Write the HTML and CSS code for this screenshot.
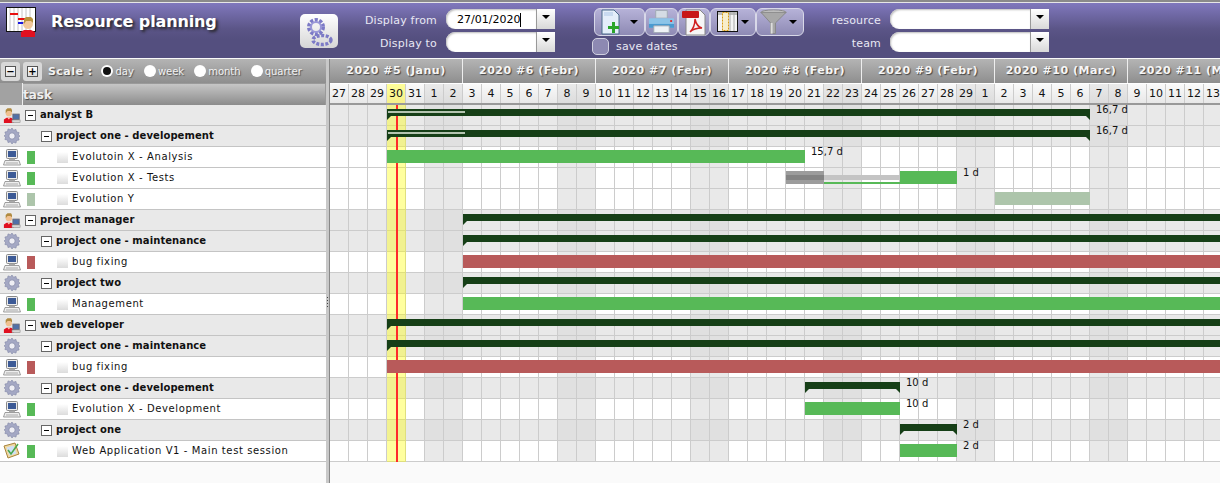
FILE: index.html
```html
<!DOCTYPE html>
<html lang="en">
<head>
  <meta charset="UTF-8">
  <title>Resource planning</title>
  <link rel="stylesheet" href="styles.css">
</head>
<body>

  <!-- shared icons -->
  <svg class="defs" width="0" height="0">
    <symbol id="i-user" viewBox="0 0 20 18">
      <path d="M1 18v-4l3-2h5l3 2v4z" fill="#e01020"/>
      <path d="M5 12l1.500 2L8 12z" fill="#ffd0b0"/>
      <circle cx="6.500" cy="7" r="3.500" fill="#f0c090"/>
      <path d="M3 7V3.500L5 1.500h4l1 2V6L8 4.500H5z" fill="#b08a40"/>
      <rect x="11" y="8" width="7" height="6" fill="#5070a8" stroke="#667" stroke-width="1"/>
      <rect x="10" y="14.500" width="9" height="3" fill="#d8d8d8" stroke="#888" stroke-width=".6"/>
    </symbol>
    <symbol id="i-gear" viewBox="0 0 18 18">
      <path d="M9 1l1.500 2.200 2.500-.8.500 2.600 2.600.5-.8 2.500L17 9l-1.700 1.500.8 2.500-2.600.5-.5 2.600-2.500-.8L9 17l-1.500-2.200-2.500.8-.5-2.600-2.600-.5.8-2.500L1 9l1.700-1.500-.8-2.500 2.600-.5.500-2.600 2.500.8z" fill="#a4a8c4" stroke="#8286a6" stroke-width=".6"/>
      <circle cx="9" cy="9" r="3.200" fill="#eeeef4" stroke="#8286a6" stroke-width=".8"/>
    </symbol>
    <symbol id="i-pc" viewBox="0 0 18 18">
      <rect x="3.500" y="1.500" width="11" height="9" rx="1" fill="#ececec" stroke="#888"/>
      <rect x="5" y="3" width="8" height="6" fill="#3c5a96"/>
      <rect x="6" y="10.500" width="6" height="1.500" fill="#aaa"/>
      <path d="M2 12.500h14l1.500 4.500H.5z" fill="#eeeeee" stroke="#888" stroke-width=".8"/>
      <path d="M3 15h12" stroke="#aaa"/>
    </symbol>
    <symbol id="i-test" viewBox="0 0 18 18">
      <path d="M1 4l11-3 4 11-11 4z" fill="#f0d8a0" stroke="#a8843c"/>
      <path d="M3.500 5.500l7-2 3 8-7 2z" fill="#cfe0f6"/>
      <path d="M5 8l3 4 7-10" fill="none" stroke="#4aa84d" stroke-width="1.600"/>
    </symbol>
  </svg>

  <div class="top-strip"></div>

  <header class="header">
    <svg class="logo" width="32" height="30" viewBox="0 0 32 30">
      <rect x=".5" y=".5" width="29" height="24" fill="#fff" stroke="#111"/>
      <path d="M4 1v23M8 1v23M12 1v23M16 1v23M20 1v23M24 1v23" stroke="#c4c4c4"/>
      <rect x="4" y="6" width="8" height="2" fill="#e81010"/>
      <rect x="12" y="11" width="8" height="2" fill="#e81010"/>
      <rect x="12" y="15" width="7" height="2" fill="#1a1ae0"/>
      <path d="M15 30v-5l3-2h7l4 2v5z" fill="#e01020"/>
      <circle cx="22" cy="17" r="5" fill="#f2c79a"/>
      <path d="M18 17v-5l2-2h5l2 2v4l-2-2h-5z" fill="#b9923c"/>
    </svg>
    <h1 class="title">Resource planning</h1>

    <div class="gear-btn">
      <svg width="32" height="32" viewBox="0 0 32 32">
        <circle cx="13" cy="12" r="7" fill="none" stroke="#7c7ac6" stroke-width="4" stroke-dasharray="3 1.500"/>
        <circle cx="13" cy="12" r="5" fill="none" stroke="#9a98d8" stroke-width="2"/>
        <ellipse cx="19" cy="25" rx="9" ry="4.500" fill="none" stroke="#7c7ac6" stroke-width="3.500" stroke-dasharray="3 1.500"/>
      </svg>
    </div>

    <div class="filter-col dates">
      <div class="field">
        <label class="field-label">Display from</label>
        <div class="combo date-combo"><div class="combo-text"><span class="caret-end">27/01/2020</span></div><div class="combo-arrow"></div></div>
      </div>
      <div class="field">
        <label class="field-label">Display to</label>
        <div class="combo date-combo"><div class="combo-text"></div><div class="combo-arrow"></div></div>
      </div>
    </div>

    <div class="tools">
      <div class="tool-row">
        <div class="tool tool-new">
          <svg width="20" height="26" viewBox="0 0 20 26">
            <path d="M1 1h12l5 5v19H1z" fill="#e4eefa" stroke="#4a6a8a"/>
            <path d="M3 3h9v4H3z" fill="#c8daf0"/>
            <path d="M11 13h3v4h4v3h-4v4h-3v-4H7v-3h4z" fill="#2aa52a"/>
          </svg>
          <span class="arrow"></span>
        </div>
        <div class="tool tool-print">
          <svg width="28" height="26" viewBox="0 0 28 26">
            <path d="M8 1h12v8H8z" fill="#d4dce4" stroke="#a0aab4"/>
            <path d="M2 9h24a1 1 0 0 1 1 1v9H1v-9a1 1 0 0 1 1-1z" fill="#8cc4e8"/>
            <path d="M1 15h26v4H1z" fill="#4a9ad0"/>
            <path d="M6 17h16v7H6z" fill="#eef2f6" stroke="#a0aab4"/>
            <rect x="23" y="11" width="2" height="2" fill="#e03030"/>
          </svg>
        </div>
        <div class="tool tool-pdf">
          <svg width="26" height="27" viewBox="0 0 26 27">
            <path d="M5 1h14l5 5v20H5z" fill="#f6f6f6" stroke="#888"/>
            <rect x="1" y="2" width="17" height="7" rx="1" fill="#c81818"/>
            <path d="M9 23c3-3 5-8 5-13 1 5 3 8 7 9-4 0-9 1-12 4z" fill="none" stroke="#d02020" stroke-width="1.500"/>
          </svg>
        </div>
        <div class="tool tool-cols">
          <svg width="22" height="22" viewBox="0 0 22 22">
            <rect x=".5" y=".5" width="20" height="20" fill="#f4f4f4" stroke="#111"/>
            <rect x="1" y="1" width="19" height="3" fill="#bbb"/>
            <path d="M13 1v19M17 1v19" stroke="#aaa"/>
            <rect x="5.500" y="1.500" width="6" height="18" fill="#f8eecb" stroke="#d89a10" stroke-dasharray="2 1"/>
          </svg>
          <span class="arrow"></span>
        </div>
        <div class="tool tool-filter">
          <svg width="30" height="26" viewBox="0 0 30 26">
            <ellipse cx="14" cy="3" rx="13" ry="2.500" fill="#c8c8c8" stroke="#888"/>
            <path d="M1 3l10 11v11h5V14L27 3z" fill="#a8a8a8" stroke="#888"/>
            <path d="M12 14v11" stroke="#ddd" stroke-width="2"/>
          </svg>
          <span class="arrow"></span>
        </div>
      </div>
      <div class="save-row">
        <span class="check"></span>
        <span class="save-label">save dates</span>
      </div>
    </div>

    <div class="filter-col people">
      <div class="field">
        <label class="field-label">resource</label>
        <div class="combo people-combo"><div class="combo-text"></div><div class="combo-arrow"></div></div>
      </div>
      <div class="field">
        <label class="field-label">team</label>
        <div class="combo people-combo"><div class="combo-text"></div><div class="combo-arrow"></div></div>
      </div>
    </div>
  </header>

  <div class="main">
    <div class="left-panel">
      <div class="scale-bar">
        <span class="zoom-btn minus"></span>
        <span class="zoom-btn plus"></span>
        <span class="scale-title">Scale :</span>
        <span class="radio on"></span><span class="radio-label">day</span>
        <span class="radio"></span><span class="radio-label">week</span>
        <span class="radio"></span><span class="radio-label">month</span>
        <span class="radio"></span><span class="radio-label">quarter</span>
      </div>
      <div class="task-head">
        <div class="task-head-ico"></div>
        <div class="task-head-name">task</div>
      </div>

      <div class="tree-row grp lvl1"><svg class="ico"><use href="#i-user"/></svg><span class="toggle"></span><span class="name">analyst B</span></div>
      <div class="tree-row grp lvl2"><svg class="ico"><use href="#i-gear"/></svg><span class="toggle"></span><span class="name">project one - developement</span></div>
      <div class="tree-row task"><svg class="ico"><use href="#i-pc"/></svg><span class="state green"></span><span class="chk"></span><span class="name">Evolutoin X - Analysis</span></div>
      <div class="tree-row task"><svg class="ico"><use href="#i-pc"/></svg><span class="state green"></span><span class="chk"></span><span class="name">Evolution X - Tests</span></div>
      <div class="tree-row task"><svg class="ico"><use href="#i-pc"/></svg><span class="state pale"></span><span class="chk"></span><span class="name">Evolution Y</span></div>
      <div class="tree-row grp lvl1"><svg class="ico"><use href="#i-user"/></svg><span class="toggle"></span><span class="name">project manager</span></div>
      <div class="tree-row grp lvl2"><svg class="ico"><use href="#i-gear"/></svg><span class="toggle"></span><span class="name">project one - maintenance</span></div>
      <div class="tree-row task"><svg class="ico"><use href="#i-pc"/></svg><span class="state red"></span><span class="chk"></span><span class="name">bug fixing</span></div>
      <div class="tree-row grp lvl2"><svg class="ico"><use href="#i-gear"/></svg><span class="toggle"></span><span class="name">project two</span></div>
      <div class="tree-row task"><svg class="ico"><use href="#i-pc"/></svg><span class="state green"></span><span class="chk"></span><span class="name">Management</span></div>
      <div class="tree-row grp lvl1"><svg class="ico"><use href="#i-user"/></svg><span class="toggle"></span><span class="name">web developer</span></div>
      <div class="tree-row grp lvl2"><svg class="ico"><use href="#i-gear"/></svg><span class="toggle"></span><span class="name">project one - maintenance</span></div>
      <div class="tree-row task"><svg class="ico"><use href="#i-pc"/></svg><span class="state red"></span><span class="chk"></span><span class="name">bug fixing</span></div>
      <div class="tree-row grp lvl2"><svg class="ico"><use href="#i-gear"/></svg><span class="toggle"></span><span class="name">project one - developement</span></div>
      <div class="tree-row task"><svg class="ico"><use href="#i-pc"/></svg><span class="state green"></span><span class="chk"></span><span class="name">Evolution X - Development</span></div>
      <div class="tree-row grp lvl2"><svg class="ico"><use href="#i-gear"/></svg><span class="toggle"></span><span class="name">project one</span></div>
      <div class="tree-row task"><svg class="ico"><use href="#i-test"/></svg><span class="state green"></span><span class="chk"></span><span class="name">Web Application V1 - Main test session</span></div>
    </div>

    <div class="splitter"><span class="grip"></span></div>

    <div class="chart">
      <div class="weeks">
        <div class="week">2020 #5 (Janu)</div>
        <div class="week">2020 #6 (Febr)</div>
        <div class="week">2020 #7 (Febr)</div>
        <div class="week">2020 #8 (Febr)</div>
        <div class="week">2020 #9 (Febr)</div>
        <div class="week">2020 #10 (Marc)</div>
        <div class="week">2020 #11 (Marc)</div>
      </div>
      <div class="days">
        <div class="day">27</div><div class="day">28</div><div class="day">29</div><div class="day today-head">30</div><div class="day">31</div><div class="day we">1</div><div class="day we">2</div>
        <div class="day">3</div><div class="day">4</div><div class="day">5</div><div class="day">6</div><div class="day">7</div><div class="day we">8</div><div class="day we">9</div>
        <div class="day">10</div><div class="day">11</div><div class="day">12</div><div class="day">13</div><div class="day">14</div><div class="day we">15</div><div class="day we">16</div>
        <div class="day">17</div><div class="day">18</div><div class="day">19</div><div class="day">20</div><div class="day">21</div><div class="day we">22</div><div class="day we">23</div>
        <div class="day">24</div><div class="day">25</div><div class="day">26</div><div class="day">27</div><div class="day">28</div><div class="day we">29</div><div class="day we">1</div>
        <div class="day">2</div><div class="day">3</div><div class="day">4</div><div class="day">5</div><div class="day">6</div><div class="day we">7</div><div class="day we">8</div>
        <div class="day">9</div><div class="day">10</div><div class="day">11</div><div class="day">12</div><div class="day">13</div>
      </div>

      <div class="gantt">
        <div class="today"></div>

        <div class="g-row grp">
          <div class="bar-sum" style="grid-column: 4 / span 37"><span class="progress"></span></div>
          <span class="g-label" style="grid-column: 41 / span 3">16,7 d</span>
        </div>
        <div class="g-row grp">
          <div class="bar-sum" style="grid-column: 4 / span 37"><span class="progress"></span></div>
          <span class="g-label" style="grid-column: 41 / span 3">16,7 d</span>
        </div>
        <div class="g-row">
          <div class="bar green" style="grid-column: 4 / span 22"></div>
          <span class="g-label" style="grid-column: 26 / span 3">15,7 d</span>
        </div>
        <div class="g-row">
          <div class="bar late" style="grid-column: 25 / span 2"></div>
          <div class="bar gap" style="grid-column: 27 / span 4"></div>
          <div class="bar green" style="grid-column: 31 / span 3"></div>
          <span class="g-label" style="grid-column: 34 / span 3">1 d</span>
        </div>
        <div class="g-row">
          <div class="bar pale" style="grid-column: 36 / span 5"></div>
        </div>
        <div class="g-row grp"><div class="bar-sum open" style="grid-column: 8 / span 40"></div></div>
        <div class="g-row grp"><div class="bar-sum open" style="grid-column: 8 / span 40"></div></div>
        <div class="g-row"><div class="bar red" style="grid-column: 8 / span 40"></div></div>
        <div class="g-row grp"><div class="bar-sum open" style="grid-column: 8 / span 40"></div></div>
        <div class="g-row"><div class="bar green" style="grid-column: 8 / span 40"></div></div>
        <div class="g-row grp"><div class="bar-sum open" style="grid-column: 4 / span 44"></div></div>
        <div class="g-row grp"><div class="bar-sum open" style="grid-column: 4 / span 44"></div></div>
        <div class="g-row"><div class="bar red" style="grid-column: 4 / span 44"></div></div>
        <div class="g-row grp">
          <div class="bar-sum" style="grid-column: 26 / span 5"></div>
          <span class="g-label" style="grid-column: 31 / span 3">10 d</span>
        </div>
        <div class="g-row">
          <div class="bar green" style="grid-column: 26 / span 5"></div>
          <span class="g-label" style="grid-column: 31 / span 3">10 d</span>
        </div>
        <div class="g-row grp">
          <div class="bar-sum" style="grid-column: 31 / span 3"></div>
          <span class="g-label" style="grid-column: 34 / span 3">2 d</span>
        </div>
        <div class="g-row">
          <div class="bar green" style="grid-column: 31 / span 3"></div>
          <span class="g-label" style="grid-column: 34 / span 3">2 d</span>
        </div>
      </div>
    </div>
  </div>

</body>
</html>
```

FILE: styles.css
```css
html, body {
  margin: 0;
  height: 100%;
}
body {
  font-family: 'DejaVu Sans', Verdana, sans-serif;
  font-size: 10px;
  color: #111;
  background-color: #fafafa;
  width: 1220px;
  height: 483px;
  overflow: hidden;
}
.defs {
  position: absolute;
}
.top-strip {
  height: 3px;
  background: linear-gradient(#8a8a8a 0, #8a8a8a 2px, #e6e6e6 2px);
}

/* header */
.header {
  height: 55px;
  display: flex;
  background: linear-gradient(#8078bd 0, #5b5587 26px, #544f7f 36px);
  color: #fff;
  box-sizing: border-box;
}
.logo {
  margin: 4px 0 0 6px;
  flex: none;
}
.title {
  margin: 9px 0 0 13px;
  width: 249px;
  flex: none;
  font-size: 16px;
  line-height: 20px;
  font-weight: bold;
  letter-spacing: -.12px;
  color: #fff;
  text-shadow: 2px 2px 3px #222;
  white-space: nowrap;
}
.gear-btn {
  width: 38px;
  height: 34px;
  margin-top: 11px;
  flex: none;
  background: linear-gradient(#fff, #d6d6d6);
  border-radius: 5px;
  display: flex;
  align-items: center;
  justify-content: center;
}
.filter-col {
  display: flex;
  flex-direction: column;
  gap: 3px;
  margin-top: 6px;
  flex: none;
}
.dates {
  width: 217px;
}
.people {
  width: 238px;
  margin-left: -2px;
}
.field {
  display: flex;
  align-items: center;
  justify-content: flex-end;
  height: 20px;
}
.field-label {
  font-size: 11px;
  letter-spacing: .2px;
  color: #e8e8f4;
  margin-right: 9px;
  padding-top: 2px;
}
.combo {
  display: flex;
  height: 20px;
}
.date-combo {
  width: 109px;
}
.people-combo {
  width: 159px;
}
.combo-text {
  flex: 1;
  background-color: #fff;
  border-radius: 9px 0 0 9px;
  box-shadow: inset 1px 1px 2px #bbb;
  font-size: 11px;
  color: #000;
  line-height: 22px;
  padding-left: 11px;
}
.caret-end {
  border-right: 1px solid #000;
  display: inline-block;
  line-height: 14px;
}
.combo-arrow {
  width: 19px;
  border-left: 1px solid #999;
  background: linear-gradient(#fff, #d8d8d8);
  display: flex;
  align-items: flex-start;
  justify-content: center;
  padding-top: 6px;
  box-sizing: border-box;
}
.combo-arrow::before, .arrow {
  content: '';
  width: 0;
  height: 0;
  border-left: 4px solid transparent;
  border-right: 4px solid transparent;
  border-top: 4px solid #000;
}

/* toolbar */
.tools {
  width: 220px;
  margin-left: 38px;
  flex: none;
}
.tool-row {
  display: flex;
  height: 28px;
  margin-top: 5px;
  margin-left: 1px;
}
.tool {
  box-sizing: border-box;
  height: 28px;
  border: 1px solid #d8d8e8;
  border-radius: 6px;
  background: linear-gradient(#b6b2d8, #8e8ab4);
  display: flex;
  align-items: center;
  justify-content: space-between;
  padding: 0 6px;
  flex: none;
}
.tool-new { width: 51px; }
.tool-print { width: 33px; padding: 0 2px; }
.tool-pdf { width: 32px; padding: 0 2px; }
.tool-cols { width: 46px; padding: 0 6px; }
.tool-filter { width: 48px; padding: 0 6px 0 3px; }
.save-row {
  display: flex;
  align-items: center;
  margin-top: 2px;
  margin-left: -1px;
}
.check {
  width: 15px;
  height: 15px;
  border: 1px solid #d0d0e0;
  border-radius: 5px;
  background-color: #8d89b2;
}
.save-label {
  font-size: 11px;
  letter-spacing: .2px;
  color: #e8e8f4;
  margin-left: 7px;
}

/* main area */
.main {
  display: flex;
  height: 424px;
  margin-top: 1px;
}
.left-panel {
  width: 326px;
  flex: none;
}
.scale-bar {
  height: 24px;
  display: flex;
  align-items: center;
  background: linear-gradient(#b4b4b4, #8e8e8e);
  color: #f2f2f2;
  padding-left: 1px;
}
.zoom-btn {
  width: 19px;
  height: 19px;
  box-sizing: border-box;
  background-color: #d8d8d8;
  border-radius: 3px;
  margin-right: 3px;
  position: relative;
  display: flex;
  align-items: center;
  justify-content: center;
}
.zoom-btn::before {
  content: '';
  width: 9px;
  height: 9px;
  border: 1px solid #555;
  background: linear-gradient(#fff, #ddd);
}
.zoom-btn::after {
  position: absolute;
  content: '\2212';
  font-size: 10px;
  font-weight: bold;
  color: #000;
}
.zoom-btn.plus::after {
  content: '+';
}
.scale-title {
  font-size: 11px;
  font-weight: bold;
  margin: 0 9px 0 3px;
  text-shadow: 1px 1px 1px #444;
  letter-spacing: .45px;
}
.radio {
  width: 12px;
  height: 12px;
  background-color: #fff;
  border-radius: 50%;
  margin-right: 2px;
  display: flex;
  align-items: center;
  justify-content: center;
  flex: none;
}
.radio.on::before {
  content: '';
  width: 8px;
  height: 8px;
  border-radius: 50%;
  background-color: #111;
}
.radio-label {
  margin-right: 10px;
  text-shadow: 1px 1px 1px #555;
}
.task-head {
  height: 22px;
  display: flex;
  background-color: #9a9a9a;
}
.task-head-ico {
  width: 22px;
  background-color: #a2a2a2;
  border-right: 1px solid #eee;
}
.task-head-name {
  flex: 1;
  margin-top: 1px;
  background: linear-gradient(#c6c6c6, #8c8c8c);
  font-size: 12px;
  font-weight: bold;
  color: #eee;
  line-height: 23px;
  text-shadow: 1px 1px 1px #444;
  margin-right: 1px;
}
.tree-row {
  height: 21px;
  box-sizing: border-box;
  border-bottom: 1px solid #c4c4c4;
  display: flex;
  align-items: center;
  background-color: #fff;
  white-space: nowrap;
}
.tree-row.grp {
  background-color: #e9e9e9;
  font-weight: bold;
}
.ico {
  width: 18px;
  height: 18px;
  margin-left: 3px;
  margin-right: 1px;
  flex: none;
}
.toggle {
  width: 11px;
  height: 11px;
  box-sizing: border-box;
  border: 1px solid #666;
  background: #fff;
  position: relative;
  flex: none;
}
.toggle::before {
  content: '';
  position: absolute;
  left: 2px;
  top: 4px;
  width: 5px;
  height: 1px;
  background-color: #000;
}
.lvl1 .toggle { margin-left: 3px; }
.lvl2 .toggle { margin-left: 19px; }
.name {
  margin-bottom: 2px;
}
.grp .name {
  margin-left: 4px;
  letter-spacing: .08px;
}
.state {
  width: 8px;
  height: 13px;
  margin-left: 5px;
  flex: none;
}
.state.green { background-color: #57b957; }
.state.pale { background-color: #adc5ab; }
.state.red { background-color: #b85a5a; }
.chk {
  width: 11px;
  height: 11px;
  margin-left: 22px;
  background: linear-gradient(#fff, #dcdcdc);
  flex: none;
}
.task .name {
  margin-left: 4px;
  letter-spacing: .6px;
}
.splitter {
  width: 4px;
  flex: none;
  background-color: #c8c8c8;
  border-right: 1px solid #888;
  box-sizing: border-box;
  display: flex;
  align-items: center;
  justify-content: center;
}
.grip {
  width: 1px;
  height: 12px;
  margin-top: 64px;
  background: repeating-linear-gradient(#444 0, #444 1px, transparent 1px, transparent 3px);
}

/* chart */
.chart {
  flex: 1;
  min-width: 0;
  overflow: hidden;
}
.weeks {
  display: flex;
  height: 24px;
  width: 931px;
}
.week {
  width: 133px;
  box-sizing: border-box;
  flex: none;
  background: linear-gradient(#b4b4b4, #8e8e8e);
  border-right: 1px solid #eee;
  color: #f6f6f6;
  font-size: 11px;
  font-weight: bold;
  letter-spacing: .5px;
  line-height: 24px;
  text-align: center;
  text-shadow: 1px 1px 1px #444;
  white-space: nowrap;
  overflow: hidden;
}
.days {
  display: flex;
  height: 22px;
  box-sizing: border-box;
  border-top: 1px solid #fff;
  border-bottom: 2px solid #999;
  width: 893px;
}
.day {
  width: 19px;
  box-sizing: border-box;
  flex: none;
  border-right: 1px solid #ccc;
  background: linear-gradient(#fafafa, #e8e8e8);
  font-size: 11px;
  line-height: 19px;
  text-align: center;
  color: #111;
}
.day.we {
  background: linear-gradient(#eaeaea, #dcdcdc);
}
.day.today-head {
  background: linear-gradient(#ffff99, #f6f08a);
}
.gantt {
  position: relative;
  width: 893px;
}
.today {
  position: absolute;
  left: 57px;
  top: 0;
  height: 357px;
  width: 19px;
  z-index: 1;
  background: linear-gradient(90deg, transparent 9px, #ff2a2a 9px, #ff2a2a 11px, transparent 11px), rgba(255, 255, 0, .38);
}
.g-row {
  --row-bg: #fff;
  --row-we: #e9e9e9;
  height: 21px;
  box-sizing: border-box;
  border-bottom: 1px solid #ccc;
  display: grid;
  grid-template-columns: repeat(47, 19px);
  grid-template-rows: 20px;
  background-image:
    repeating-linear-gradient(90deg, transparent 0, transparent 18px, #ccc 18px, #ccc 19px),
    repeating-linear-gradient(90deg, var(--row-bg) 0, var(--row-bg) 95px, var(--row-we) 95px, var(--row-we) 133px);
}
.g-row.grp {
  --row-bg: #e9e9e9;
  --row-we: #e0e0e0;
}
.bar, .bar-sum, .g-label {
  grid-row: 1;
  position: relative;
  z-index: 2;
}
.bar {
  height: 13px;
  margin-top: 3px;
}
.bar.green { background-color: #57b957; }
.bar.red { background-color: #b85a5a; }
.bar.pale { background-color: #adc5ab; }
.bar.late {
  background: linear-gradient(#9c9c9c 4px, #838383 4px, #838383 9px, #9c9c9c 9px);
}
.bar.gap {
  background: linear-gradient(transparent 4px, #c4c4c4 4px, #c4c4c4 9px, transparent 9px, transparent 11px, #57b957 11px);
}
.bar-sum {
  height: 7px;
  margin-top: 4px;
  background-color: #163f17;
}
.bar-sum::before, .bar-sum::after {
  content: '';
  position: absolute;
  top: 7px;
  width: 0;
  height: 0;
  border-top: 4px solid #163f17;
}
.bar-sum::before {
  left: 0;
  border-right: 4px solid transparent;
}
.bar-sum::after {
  right: 0;
  border-left: 4px solid transparent;
}
.bar-sum.open::after {
  display: none;
}
.progress {
  position: absolute;
  left: 1px;
  top: 2px;
  width: 77px;
  height: 2px;
  background-color: #b4c4b0;
}
.g-label {
  padding-left: 6px;
  line-height: 9px;
  height: 9px;
  white-space: nowrap;
  color: #111;
}
```
